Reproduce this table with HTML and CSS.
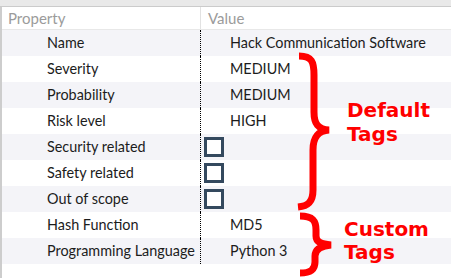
FILE: index.html
```html
<!DOCTYPE html>
<html>
<head>
<meta charset="utf-8">
<link rel="stylesheet" href="styles.css">
</head>
<body>
<div class="topbar"></div>
<div class="grid">
  <div class="head">
    <div class="hcell hprop">Property</div>
    <div class="hcell hval">Value</div>
  </div>
  <div class="row odd"><div class="prop">Name</div><div class="val">Hack Communication Software</div></div>
  <div class="row"><div class="prop">Severity</div><div class="val">MEDIUM</div></div>
  <div class="row odd"><div class="prop">Probability</div><div class="val">MEDIUM</div></div>
  <div class="row"><div class="prop">Risk level</div><div class="val">HIGH</div></div>
  <div class="row odd"><div class="prop">Security related</div><div class="val check"><span class="box"></span></div></div>
  <div class="row"><div class="prop">Safety related</div><div class="val check"><span class="box"></span></div></div>
  <div class="row odd"><div class="prop">Out of scope</div><div class="val check"><span class="box"></span></div></div>
  <div class="row"><div class="prop">Hash Function</div><div class="val">MD5</div></div>
  <div class="row odd"><div class="prop">Programming Language</div><div class="val">Python 3</div></div>
</div>
<svg class="braces" width="451" height="278" viewBox="0 0 451 278">
  <path d="M 299 56 C 312 56, 314 62, 314 75 L 314 112 C 314 124, 318 129, 329 130 C 318 131, 313 137, 313 150 L 313 190 C 313 202, 308 206, 298 207" />
  <path d="M 300 216 C 313 216, 316 221, 316 230 L 316 236 C 316 242, 321 244, 331 245 C 321 246, 315 249, 315 256 L 315 262 C 315 270, 310 273, 300 273" />
</svg>
<div class="note note-default">Default<br>Tags</div>
<div class="note note-custom">Custom<br>Tags</div>
</body>
</html>
```
FILE: styles.css
```css
html, body {
  margin: 0;
  padding: 0;
  background: #ffffff;
  width: 451px;
  height: 278px;
  overflow: hidden;
  position: relative;
  font-family: "Lato", "DejaVu Sans", sans-serif;
  font-size: 14.4px;
  color: #1c1c1c;
}
.topbar {
  height: 6px;
  background: #e9e9e9;
  border-bottom: 1px solid #cbcbcb;
}
.grid {
  border-left: 2px solid #cdcdcd;
  height: 271px;
}
.head {
  display: flex;
  height: 22px;
  border-bottom: 1px solid #e8e8e8;
}
.hcell {
  color: #9b9b9b;
  font-size: 15px;
  line-height: 22px;
}
.hprop {
  width: 192px;
  padding-left: 6px;
  border-right: 1px solid #e2e2e2;
}
.hval {
  padding-left: 7px;
}
.row {
  display: flex;
  height: 26px;
  background: #ffffff;
}
.row.odd {
  background: #f4f4f8;
}
.prop {
  width: 153px;
  padding-left: 45px;
  line-height: 26px;
  white-space: nowrap;
}
.val {
  flex: 1;
  border-left: 1px dotted #000000;
  padding-left: 29px;
  line-height: 26px;
  white-space: nowrap;
}
.val.check {
  padding-left: 3px;
  display: flex;
  align-items: center;
}
.box {
  display: block;
  width: 14px;
  height: 14px;
  border: 3px solid #34495e;
  background: #ffffff;
}
.braces {
  position: absolute;
  left: 0;
  top: 0;
}
.braces path {
  fill: none;
  stroke: #ff0000;
  stroke-width: 7;
}
.note {
  position: absolute;
  font-family: "DejaVu Sans", sans-serif;
  font-weight: bold;
  font-size: 20px;
  color: #ff0000;
}
.note-default {
  left: 347px;
  top: 98px;
  line-height: 24px;
}
.note-custom {
  left: 344px;
  top: 218px;
  line-height: 23px;
}
```
